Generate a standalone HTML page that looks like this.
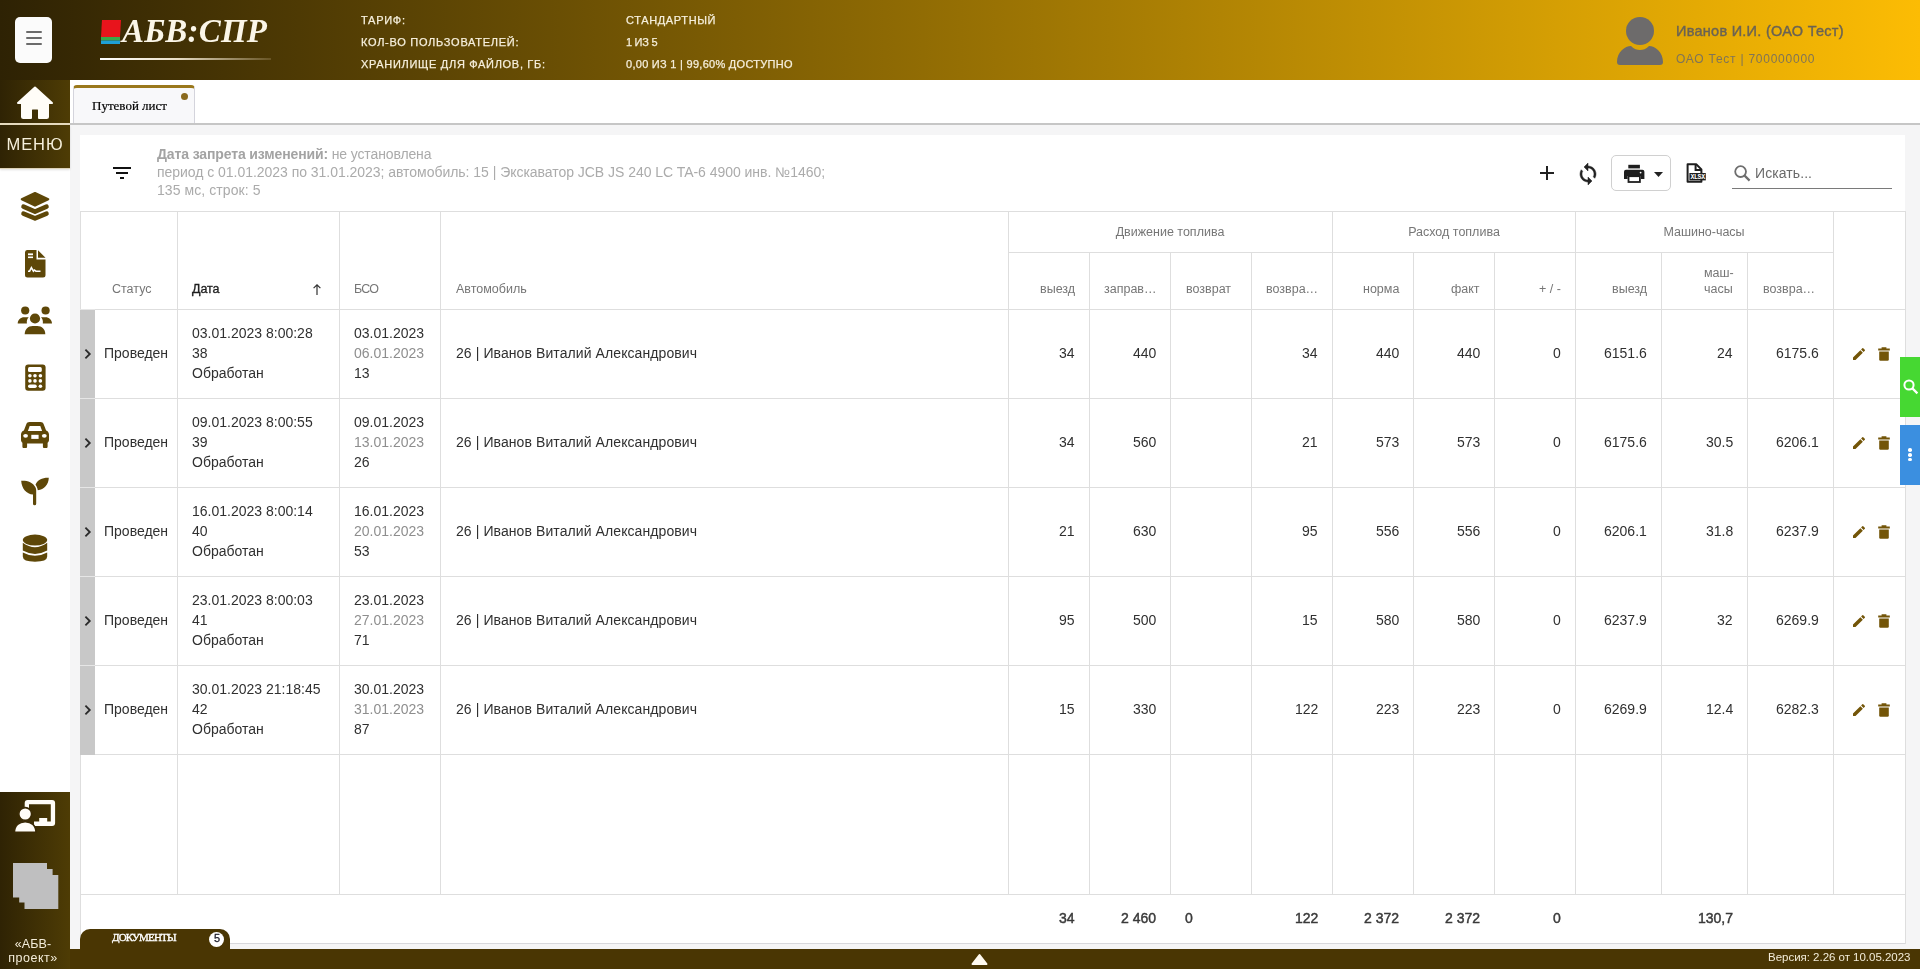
<!DOCTYPE html>
<html><head><meta charset="utf-8"><style>
*{margin:0;padding:0;box-sizing:border-box}
html,body{width:1920px;height:969px;overflow:hidden;background:#f5f5f6;font-family:"Liberation Sans",sans-serif;position:relative}
.abs{position:absolute}
.t{position:absolute;white-space:nowrap;line-height:1;will-change:transform}
.vl{position:absolute;width:1px;background:#dedede}
.hl{position:absolute;height:1px;background:#dedede}
</style></head><body>

<div class="abs" style="left:0;top:0;width:1920px;height:80px;background:linear-gradient(to right,#2e2204 0%,#fcbc04 100%)"></div>
<div class="abs" style="left:15px;top:17px;width:37px;height:46px;background:#fbfbfb;border-radius:5px"></div>
<div class="abs" style="left:26px;top:31px;width:16px;height:2px;background:#6b6b6b;border-radius:1px"></div>
<div class="abs" style="left:26px;top:37px;width:16px;height:2px;background:#6b6b6b;border-radius:1px"></div>
<div class="abs" style="left:26px;top:43px;width:16px;height:2px;background:#6b6b6b;border-radius:1px"></div>
<svg class="abs" style="left:100px;top:19px" width="22" height="26" viewBox="0 0 22 26"><path d="M2 1h19l-1 17H1z" fill="#e8141c"/><path d="M1 18h19v3.5H1z" fill="#3aa84a"/><path d="M1 21.5h19l0 3.5H1z" fill="#1ea0d8"/></svg>
<div class="abs" style="left:100px;top:58px;width:171px;height:2px;background:linear-gradient(to right,#fff 0%,#eadfc8 45%,rgba(190,170,130,0.25) 100%)"></div>
<svg class="abs" style="left:1616px;top:16px" width="48" height="50" viewBox="0 0 48 50"><circle cx="24" cy="15" r="14" fill="#6d6b6b"/><path d="M1 46c0-10 8-16 14-16 3 3 6 4 9 4s6-1 9-4c6 0 14 6 14 16a3 3 0 0 1-3 3H4a3 3 0 0 1-3-3z" fill="#6d6b6b"/></svg>
<div class="abs" style="left:0;top:80px;width:70px;height:889px;background:#fff"></div>
<div class="abs" style="left:0;top:80px;width:70px;height:43px;background:linear-gradient(to right,#2f2304,#4e3c05)"></div>
<div class="abs" style="left:0;top:123px;width:70px;height:2px;background:#e6dbbf"></div>
<div class="abs" style="left:0;top:125px;width:70px;height:44px;background:linear-gradient(to right,#2f2304,#4e3c05);border-bottom:1px solid #ddd2b8;box-shadow:0 1px 2px rgba(0,0,0,0.12)"></div>
<svg class="abs" style="left:16px;top:86px" width="38" height="34" viewBox="0 0 38 34"><path d="M19 1.5 L36 17 L32 17 L32 30.5 a1.5 1.5 0 0 1-1.5 1.5 L23 32 L23 24 a1.5 1.5 0 0 0-1.5-1.5 L16.5 22.5 a1.5 1.5 0 0 0-1.5 1.5 L15 32 L7.5 32 a1.5 1.5 0 0 1-1.5-1.5 L6 17 L2 17 Z" fill="#fffdf8" stroke="#fffdf8" stroke-width="2" stroke-linejoin="round"/></svg>
<svg class="abs" style="left:20px;top:191px" width="30" height="30" viewBox="0 0 30 30"><path d="M1.8 8.2L15 2 28.2 8.2 15 14.6z" fill="#5e4708" stroke="#5e4708" stroke-width="2.2" stroke-linejoin="round"/><path d="M3.5 15.6L15 20.6 26.5 15.6" fill="none" stroke="#5e4708" stroke-width="4.6" stroke-linecap="round" stroke-linejoin="round"/><path d="M3.5 22.6L15 27.4 26.5 22.6" fill="none" stroke="#5e4708" stroke-width="4.6" stroke-linecap="round" stroke-linejoin="round"/></svg>
<svg class="abs" style="left:24px;top:249px" width="23" height="29" viewBox="0 0 23 29"><path d="M3 1h9.5v9.5h9v15.5a2.5 2.5 0 0 1-2.5 2.5H3.5A2.5 2.5 0 0 1 1 26V3.5A2.5 2.5 0 0 1 3 1z" fill="#5e4708"/><path d="M14 1.2l7.5 7.6H14z" fill="#5e4708"/><rect x="4" y="4.4" width="5" height="1.8" fill="#fff"/><rect x="4" y="7.5" width="5" height="1.6" fill="#fff"/><path d="M4 22.2h1.6l1.8-3.6 2 3.6 1-1.2 1.5 1.2h4.6" fill="none" stroke="#fff" stroke-width="1.6"/></svg>
<svg class="abs" style="left:16px;top:304px" width="38" height="32" viewBox="0 0 38 32"><circle cx="9.2" cy="6.5" r="4.1" fill="#5e4708"/><circle cx="29.6" cy="6.5" r="4.1" fill="#5e4708"/><path d="M1.7 19.6c0-3.8 3-6.4 6.5-6.4h4.5c-1.6 1.4-2.2 3.6-1.8 6.4z" fill="#5e4708"/><path d="M36 19.6c0-3.8-3-6.4-6.5-6.4H25c1.6 1.4 2.2 3.6 1.8 6.4z" fill="#5e4708"/><circle cx="19" cy="14.5" r="5.1" fill="#5e4708"/><path d="M8.7 30.2c0-5 3.5-8.2 8-8.2h4.6c4.5 0 8 3.2 8 8.2z" fill="#5e4708"/></svg>
<svg class="abs" style="left:24px;top:363px" width="23" height="29" viewBox="0 0 23 29"><rect x="1.2" y="1.4" width="20.4" height="26.4" rx="3" fill="#5e4708"/><rect x="4" y="4.1" width="13.8" height="4.9" rx="1.6" fill="#fff"/><g fill="#fff"><circle cx="5.9" cy="12.7" r="1.8"/><circle cx="11" cy="12.7" r="1.8"/><circle cx="16.4" cy="12.7" r="1.8"/><circle cx="5.9" cy="17.9" r="1.8"/><circle cx="11" cy="17.9" r="1.8"/><circle cx="16.4" cy="17.9" r="1.8"/><rect x="4" y="21.5" width="8.8" height="3.6" rx="1.8"/><circle cx="16.4" cy="23.3" r="1.8"/></g></svg>
<svg class="abs" style="left:20px;top:421px" width="30" height="27" viewBox="0 0 30 27"><path d="M9.5 1.1h11c1.6 0 2.7.8 3.2 2.2l2.4 6.3c1.7.6 2.9 2.1 2.9 4v5.4c0 1.2-.6 2.2-1.4 2.8v3.6a1.9 1.9 0 0 1-1.9 1.9h-.9a1.9 1.9 0 0 1-1.9-1.9v-3H7.1v3a1.9 1.9 0 0 1-1.9 1.9h-.9a1.9 1.9 0 0 1-1.9-1.9v-3.6C1.6 21.2 1 20.2 1 19v-5.4c0-1.9 1.2-3.4 2.9-4l2.4-6.3C6.8 1.9 7.9 1.1 9.5 1.1z" fill="#5e4708"/><path d="M9.7 4.9h10.6l1.8 5H7.9z" fill="#fff"/><ellipse cx="5.6" cy="14.8" rx="2.4" ry="1.9" fill="#fff"/><ellipse cx="24.3" cy="14.8" rx="2.4" ry="1.9" fill="#fff"/><rect x="11.3" y="13.8" width="7.3" height="4.1" fill="#fff"/></svg>
<svg class="abs" style="left:20px;top:476px" width="30" height="30" viewBox="0 0 30 30"><path d="M1.2 4.8c5.8-.4 11.6 1.4 14.2 6.5.5 1 .8 2.2.8 3.2v13.2a1.6 1.6 0 0 1-3.2 0V18.6C6.6 18.2 1.5 12.5 1.2 4.8z" fill="#5e4708"/><path d="M28.8 1.8c-5.6-.4-11.8 2.3-13.3 6.9 1.3 1.7 2 3.6 2.3 5.6 6.4-.6 10.8-5.6 11-12.5z" fill="#5e4708"/></svg>
<svg class="abs" style="left:22px;top:533px" width="26" height="30" viewBox="0 0 26 30"><ellipse cx="13" cy="7.1" rx="12.2" ry="5.5" fill="#5e4708"/><path d="M0.8 9.8Q13 18.6 25.2 9.8V17.6Q13 24.4 0.8 17.6Z" fill="#5e4708"/><path d="M0.8 19.4Q13 26 25.2 19.4V23.6Q25.2 28.8 13 28.8Q0.8 28.8 0.8 23.6Z" fill="#5e4708"/></svg>
<div class="abs" style="left:0;top:792px;width:70px;height:177px;background:linear-gradient(to right,#2f2304,#4e3c05)"></div>
<svg class="abs" style="left:14px;top:799px" width="42" height="34" viewBox="0 0 42 34"><path d="M10.7 9V3.9a3 3 0 0 1 3-3h24.4a3 3 0 0 1 3 3v20.1a3 3 0 0 1-3 3H20v-4.4h16.8V5.3H15V9z" fill="#fffdf8"/><rect x="25.2" y="19" width="8" height="4" fill="#fffdf8"/><circle cx="11.2" cy="15" r="6.4" fill="#fffdf8" stroke="#3a2a05" stroke-width="1.6"/><path d="M0.4 33.4c0-6.8 4.6-10.8 10.8-10.8s10.8 4 10.8 10.8z" fill="#fffdf8" stroke="#3a2a05" stroke-width="1.6"/></svg>
<svg class="abs" style="left:12.7px;top:863px" width="46" height="47" viewBox="0 0 46 47"><path d="M0 0h34v6h5.6v6h5.7v34H11.5v-6.5H6.2v-5.1H0z" fill="#bfbfc0"/></svg>
<div class="abs" style="left:70px;top:80px;width:1850px;height:43px;background:#fff"></div>
<div class="abs" style="left:70px;top:123px;width:1850px;height:2px;background:#c6c6c6"></div>
<div class="abs" style="left:73px;top:85px;width:122px;height:38px;background:#f8f8fa;border:1px solid #d4d4dc;border-bottom:none;border-top:3px solid #9a781c;border-radius:4px 4px 0 0"></div>
<div class="abs" style="left:180.5px;top:92.5px;width:7.5px;height:7.5px;border-radius:50%;background:#8a6a1e"></div>
<div class="abs" style="left:80px;top:135px;width:1825px;height:809px;background:#fff"></div>
<div class="abs" style="left:113px;top:167px;width:18px;height:2px;background:#111"></div>
<div class="abs" style="left:116px;top:172px;width:12px;height:2px;background:#111"></div>
<div class="abs" style="left:120px;top:177px;width:4px;height:2px;background:#111"></div>
<svg class="abs" style="left:1539px;top:165px" width="16" height="16" viewBox="0 0 16 16"><path d="M8 1v14M1 8h14" stroke="#222" stroke-width="2"/></svg>
<svg class="abs" style="left:1576px;top:161.5px" width="24" height="24" viewBox="0 0 24 24"><path d="M12 4V1L8 5l4 4V6c3.31 0 6 2.69 6 6 0 1.01-.25 1.97-.7 2.8l1.46 1.46C19.54 15.03 20 13.57 20 12c0-4.42-3.58-8-8-8zm0 14c-3.31 0-6-2.69-6-6 0-1.01.25-1.97.7-2.8L5.24 7.74C4.46 8.97 4 10.43 4 12c0 4.42 3.58 8 8 8v3l4-4-4-4v3z" fill="#222" stroke="#222" stroke-width="0.5"/></svg>
<div class="abs" style="left:1611px;top:155px;width:60px;height:36px;border:1px solid #d0d0d0;border-radius:5px"></div>
<svg class="abs" style="left:1624px;top:164px" width="21" height="19" viewBox="0 0 21 19"><rect x="4.3" y="0.8" width="11.6" height="3.6" fill="#1e1e1e"/><path d="M2 5.8h16.4a2 2 0 0 1 2 2v7.2h-3.6v-3H3.6v3H0V7.8a2 2 0 0 1 2-2z" fill="#1e1e1e"/><rect x="4.5" y="12.2" width="11.4" height="5.8" fill="#fff" stroke="#1e1e1e" stroke-width="1.8"/><circle cx="16.6" cy="8.6" r="0.9" fill="#fff"/></svg>
<svg class="abs" style="left:1653.5px;top:171.5px" width="9" height="6" viewBox="0 0 9 6"><path d="M0 0h9L4.5 5z" fill="#222"/></svg>
<svg class="abs" style="left:1686px;top:163px" width="21" height="20" viewBox="0 0 21 20"><path d="M1.6 1.2h8.6l5.2 5.2v12.3H1.6z" fill="#fff" stroke="#1e1e1e" stroke-width="2" stroke-linejoin="round"/><path d="M9.6 1.2v5.8h5.8" fill="none" stroke="#1e1e1e" stroke-width="2"/><rect x="3.4" y="10" width="16.4" height="7.4" fill="#1e1e1e"/><text x="11.6" y="16.2" font-family="Liberation Mono" font-size="6.6" font-weight="bold" fill="#fff" text-anchor="middle" letter-spacing="-0.4">XLSX</text></svg>
<svg class="abs" style="left:1734px;top:165px" width="17" height="17" viewBox="0 0 17 17"><circle cx="6.6" cy="6.6" r="5.4" fill="none" stroke="#6e6e6e" stroke-width="1.8"/><path d="M10.6 10.6l5 5" stroke="#6e6e6e" stroke-width="2.2"/></svg>
<div class="abs" style="left:1732px;top:187.5px;width:160px;height:1.5px;background:#7a7a7a"></div>
<div class="hl" style="left:80px;top:211px;width:1826px"></div>
<div class="hl" style="left:1008px;top:252px;width:825px"></div>
<div class="hl" style="left:80px;top:309px;width:1826px"></div>
<div class="hl" style="left:80px;top:398px;width:1826px"></div>
<div class="hl" style="left:80px;top:487px;width:1826px"></div>
<div class="hl" style="left:80px;top:576px;width:1826px"></div>
<div class="hl" style="left:80px;top:665px;width:1826px"></div>
<div class="hl" style="left:80px;top:754px;width:1826px"></div>
<div class="hl" style="left:80px;top:894px;width:1826px"></div>
<div class="hl" style="left:80px;top:943px;width:1826px;background:#d8d8dc"></div>
<div class="vl" style="left:80px;top:211px;height:733px"></div>
<div class="vl" style="left:177px;top:211px;height:684px"></div>
<div class="vl" style="left:339px;top:211px;height:684px"></div>
<div class="vl" style="left:440px;top:211px;height:684px"></div>
<div class="vl" style="left:1008px;top:211px;height:684px"></div>
<div class="vl" style="left:1089px;top:252px;height:643px"></div>
<div class="vl" style="left:1170px;top:252px;height:643px"></div>
<div class="vl" style="left:1251px;top:252px;height:643px"></div>
<div class="vl" style="left:1332px;top:211px;height:684px"></div>
<div class="vl" style="left:1413px;top:252px;height:643px"></div>
<div class="vl" style="left:1494px;top:252px;height:643px"></div>
<div class="vl" style="left:1575px;top:211px;height:684px"></div>
<div class="vl" style="left:1661px;top:252px;height:643px"></div>
<div class="vl" style="left:1747px;top:252px;height:643px"></div>
<div class="vl" style="left:1833px;top:211px;height:684px"></div>
<div class="vl" style="left:1905px;top:211px;height:733px"></div>
<svg class="abs" style="left:312px;top:283px" width="10" height="13" viewBox="0 0 10 13"><path d="M5 12V1.8M1.6 5.2L5 1.8 8.4 5.2" fill="none" stroke="#333" stroke-width="1.2"/></svg>
<div class="abs" style="left:80px;top:309px;width:15px;height:90px;background:#c8c8c8;border-top:1px solid #e6e6e6"></div>
<svg class="abs" style="left:83px;top:348px" width="10" height="12" viewBox="0 0 10 12"><path d="M2.4 1.6l4.4 4.4-4.4 4.4" fill="none" stroke="#2b2b2b" stroke-width="1.8"/></svg>
<svg class="abs" style="left:1851px;top:345.5px" width="16" height="16" viewBox="0 0 24 24"><path d="M3 17.25V21h3.75L17.81 9.94l-3.75-3.75L3 17.25zM20.71 7.04a1 1 0 0 0 0-1.41l-2.34-2.34a1 1 0 0 0-1.41 0l-1.83 1.83 3.75 3.75 1.83-1.83z" fill="#735508"/></svg>
<svg class="abs" style="left:1877px;top:346.5px" width="14" height="14" viewBox="0 0 14 14"><path d="M1.2 1.6h11.6v1.8H1.2z M4.6 0.2h4.8v1.6H4.6z" fill="#735508"/><path d="M2.2 4.4h9.6v8.2a1.2 1.2 0 0 1-1.2 1.2H3.4a1.2 1.2 0 0 1-1.2-1.2z" fill="#735508"/></svg>
<div class="abs" style="left:80px;top:398px;width:15px;height:90px;background:#c8c8c8;border-top:1px solid #e6e6e6"></div>
<svg class="abs" style="left:83px;top:437px" width="10" height="12" viewBox="0 0 10 12"><path d="M2.4 1.6l4.4 4.4-4.4 4.4" fill="none" stroke="#2b2b2b" stroke-width="1.8"/></svg>
<svg class="abs" style="left:1851px;top:434.5px" width="16" height="16" viewBox="0 0 24 24"><path d="M3 17.25V21h3.75L17.81 9.94l-3.75-3.75L3 17.25zM20.71 7.04a1 1 0 0 0 0-1.41l-2.34-2.34a1 1 0 0 0-1.41 0l-1.83 1.83 3.75 3.75 1.83-1.83z" fill="#735508"/></svg>
<svg class="abs" style="left:1877px;top:435.5px" width="14" height="14" viewBox="0 0 14 14"><path d="M1.2 1.6h11.6v1.8H1.2z M4.6 0.2h4.8v1.6H4.6z" fill="#735508"/><path d="M2.2 4.4h9.6v8.2a1.2 1.2 0 0 1-1.2 1.2H3.4a1.2 1.2 0 0 1-1.2-1.2z" fill="#735508"/></svg>
<div class="abs" style="left:80px;top:487px;width:15px;height:90px;background:#c8c8c8;border-top:1px solid #e6e6e6"></div>
<svg class="abs" style="left:83px;top:526px" width="10" height="12" viewBox="0 0 10 12"><path d="M2.4 1.6l4.4 4.4-4.4 4.4" fill="none" stroke="#2b2b2b" stroke-width="1.8"/></svg>
<svg class="abs" style="left:1851px;top:523.5px" width="16" height="16" viewBox="0 0 24 24"><path d="M3 17.25V21h3.75L17.81 9.94l-3.75-3.75L3 17.25zM20.71 7.04a1 1 0 0 0 0-1.41l-2.34-2.34a1 1 0 0 0-1.41 0l-1.83 1.83 3.75 3.75 1.83-1.83z" fill="#735508"/></svg>
<svg class="abs" style="left:1877px;top:524.5px" width="14" height="14" viewBox="0 0 14 14"><path d="M1.2 1.6h11.6v1.8H1.2z M4.6 0.2h4.8v1.6H4.6z" fill="#735508"/><path d="M2.2 4.4h9.6v8.2a1.2 1.2 0 0 1-1.2 1.2H3.4a1.2 1.2 0 0 1-1.2-1.2z" fill="#735508"/></svg>
<div class="abs" style="left:80px;top:576px;width:15px;height:90px;background:#c8c8c8;border-top:1px solid #e6e6e6"></div>
<svg class="abs" style="left:83px;top:615px" width="10" height="12" viewBox="0 0 10 12"><path d="M2.4 1.6l4.4 4.4-4.4 4.4" fill="none" stroke="#2b2b2b" stroke-width="1.8"/></svg>
<svg class="abs" style="left:1851px;top:612.5px" width="16" height="16" viewBox="0 0 24 24"><path d="M3 17.25V21h3.75L17.81 9.94l-3.75-3.75L3 17.25zM20.71 7.04a1 1 0 0 0 0-1.41l-2.34-2.34a1 1 0 0 0-1.41 0l-1.83 1.83 3.75 3.75 1.83-1.83z" fill="#735508"/></svg>
<svg class="abs" style="left:1877px;top:613.5px" width="14" height="14" viewBox="0 0 14 14"><path d="M1.2 1.6h11.6v1.8H1.2z M4.6 0.2h4.8v1.6H4.6z" fill="#735508"/><path d="M2.2 4.4h9.6v8.2a1.2 1.2 0 0 1-1.2 1.2H3.4a1.2 1.2 0 0 1-1.2-1.2z" fill="#735508"/></svg>
<div class="abs" style="left:80px;top:665px;width:15px;height:90px;background:#c8c8c8;border-top:1px solid #e6e6e6"></div>
<svg class="abs" style="left:83px;top:704px" width="10" height="12" viewBox="0 0 10 12"><path d="M2.4 1.6l4.4 4.4-4.4 4.4" fill="none" stroke="#2b2b2b" stroke-width="1.8"/></svg>
<svg class="abs" style="left:1851px;top:701.5px" width="16" height="16" viewBox="0 0 24 24"><path d="M3 17.25V21h3.75L17.81 9.94l-3.75-3.75L3 17.25zM20.71 7.04a1 1 0 0 0 0-1.41l-2.34-2.34a1 1 0 0 0-1.41 0l-1.83 1.83 3.75 3.75 1.83-1.83z" fill="#735508"/></svg>
<svg class="abs" style="left:1877px;top:702.5px" width="14" height="14" viewBox="0 0 14 14"><path d="M1.2 1.6h11.6v1.8H1.2z M4.6 0.2h4.8v1.6H4.6z" fill="#735508"/><path d="M2.2 4.4h9.6v8.2a1.2 1.2 0 0 1-1.2 1.2H3.4a1.2 1.2 0 0 1-1.2-1.2z" fill="#735508"/></svg>
<div class="abs" style="left:1900px;top:357px;width:20px;height:60px;background:#46d832"></div>
<svg class="abs" style="left:1902px;top:378px" width="17" height="17" viewBox="0 0 17 17"><circle cx="7" cy="7" r="4.6" fill="none" stroke="#fff" stroke-width="2"/><path d="M10.4 10.4l5 5" stroke="#fff" stroke-width="2.2"/></svg>
<div class="abs" style="left:1900px;top:425px;width:20px;height:60px;background:#3b8fe0"></div>
<div class="abs" style="left:1908.2px;top:448.4px;width:3.6px;height:3.6px;border-radius:50%;background:#fff"></div>
<div class="abs" style="left:1908.2px;top:453px;width:3.6px;height:3.6px;border-radius:50%;background:#fff"></div>
<div class="abs" style="left:1908.2px;top:457.6px;width:3.6px;height:3.6px;border-radius:50%;background:#fff"></div>
<div class="abs" style="left:70px;top:949px;width:1850px;height:20px;background:#4a3603"></div>
<div class="abs" style="left:80px;top:929px;width:150px;height:21px;background:#4a3603;border-radius:10px 10px 0 0"></div>
<div class="abs" style="left:208.5px;top:931.5px;width:15px;height:15px;border-radius:50%;background:#fff"></div>
<svg class="abs" style="left:971px;top:953px" width="17" height="13" viewBox="0 0 17 13"><path d="M8.5 2L15.5 11H1.5z" fill="#fffaf0" stroke="#fffaf0" stroke-width="2" stroke-linejoin="round"/></svg>
<div class="t" style="left:122px;top:15.36px;font-size:33px;font-family:'Liberation Serif',serif;letter-spacing:0.198px;font-style:italic;font-weight:bold;color:#fbf6e8">АБВ:СПР</div>
<div class="t" style="left:361px;top:14.99px;font-size:11px;letter-spacing:0.728px;color:#f6efdc;-webkit-text-stroke:0.25px #f6efdc">ТАРИФ:</div>
<div class="t" style="left:626px;top:14.99px;font-size:11px;letter-spacing:0.634px;color:#f6efdc;-webkit-text-stroke:0.25px #f6efdc">СТАНДАРТНЫЙ</div>
<div class="t" style="left:361px;top:36.99px;font-size:11px;letter-spacing:0.728px;color:#f6efdc;-webkit-text-stroke:0.25px #f6efdc">КОЛ-ВО ПОЛЬЗОВАТЕЛЕЙ:</div>
<div class="t" style="left:626px;top:36.99px;font-size:11px;letter-spacing:-0.281px;color:#f6efdc;-webkit-text-stroke:0.25px #f6efdc">1 ИЗ 5</div>
<div class="t" style="left:361px;top:58.99px;font-size:11px;letter-spacing:0.689px;color:#f6efdc;-webkit-text-stroke:0.25px #f6efdc">ХРАНИЛИЩЕ ДЛЯ ФАЙЛОВ, ГБ:</div>
<div class="t" style="left:626px;top:58.99px;font-size:11px;letter-spacing:0.279px;color:#f6efdc;-webkit-text-stroke:0.25px #f6efdc">0,00 ИЗ 1 | 99,60% ДОСТУПНО</div>
<div class="t" style="left:1676px;top:23.73px;font-size:14.5px;letter-spacing:0.260px;color:#6a6354;-webkit-text-stroke:0.4px #6a6354">Иванов И.И. (ОАО Тест)</div>
<div class="t" style="left:1676px;top:52.84px;font-size:12px;letter-spacing:0.755px;color:#7f7458">ОАО Тест | 700000000</div>
<div class="t" style="left:-265px;width:600px;text-align:center;top:136.03px;font-size:16.5px;letter-spacing:0.885px;color:#f6f0dc">МЕНЮ</div>
<div class="t" style="left:-267.5px;width:600px;text-align:center;top:938.12px;font-size:12.5px;letter-spacing:0.125px;color:#f3ecd9">«АБВ-</div>
<div class="t" style="left:-267px;width:600px;text-align:center;top:952.42px;font-size:12.5px;letter-spacing:0.513px;color:#f3ecd9">проект»</div>
<div class="t" style="left:92px;top:99.11px;font-size:13px;font-family:'Liberation Serif',serif;letter-spacing:0.000px;color:#000;-webkit-text-stroke:0.2px #000">Путевой лист</div>
<div class="t" style="left:157px;top:146.65px;font-size:14px;letter-spacing:-0.128px;color:#ababab"><b style="font-weight:bold;color:#a3a3a3">Дата запрета изменений:</b> не установлена</div>
<div class="t" style="left:157px;top:164.65px;font-size:14px;letter-spacing:-0.034px;color:#ababab">период с 01.01.2023 по 31.01.2023; автомобиль: 15 | Экскаватор JCB JS 240 LC TA-6 4900 инв. №1460;</div>
<div class="t" style="left:157px;top:182.65px;font-size:14px;letter-spacing:0.078px;color:#ababab">135 мс, строк: 5</div>
<div class="t" style="left:1754.5px;top:165.95px;font-size:14px;letter-spacing:0.080px;color:#6a6a6a">Искать...</div>
<div class="t" style="left:112px;top:283.42px;font-size:12.5px;color:#767676">Статус</div>
<div class="t" style="left:192px;top:283.42px;font-size:12.5px;letter-spacing:-0.062px;color:#1e1e1e;-webkit-text-stroke:0.35px #1e1e1e">Дата</div>
<div class="t" style="left:354px;top:283.42px;font-size:12.5px;letter-spacing:-0.773px;color:#767676">БСО</div>
<div class="t" style="left:455.5px;top:283.42px;font-size:12.5px;color:#767676">Автомобиль</div>
<div class="t" style="left:870px;width:600px;text-align:center;top:226.42px;font-size:12.5px;color:#767676">Движение топлива</div>
<div class="t" style="left:1154px;width:600px;text-align:center;top:226.42px;font-size:12.5px;color:#767676">Расход топлива</div>
<div class="t" style="left:1404px;width:600px;text-align:center;top:226.42px;font-size:12.5px;color:#767676">Машино-часы</div>
<div class="t" style="right:845px;top:283.42px;font-size:12.5px;color:#767676">выезд</div>
<div class="t" style="left:1104px;top:283.42px;font-size:12.5px;color:#767676">заправ…</div>
<div class="t" style="left:1185.5px;top:283.42px;font-size:12.5px;color:#767676">возврат</div>
<div class="t" style="left:1266px;top:283.42px;font-size:12.5px;color:#767676">возвра…</div>
<div class="t" style="right:521px;top:283.42px;font-size:12.5px;color:#767676">норма</div>
<div class="t" style="right:440px;top:283.42px;font-size:12.5px;color:#767676">факт</div>
<div class="t" style="right:359px;top:283.42px;font-size:12.5px;color:#767676">+ / -</div>
<div class="t" style="right:273px;top:283.42px;font-size:12.5px;color:#767676">выезд</div>
<div class="t" style="left:1704px;top:267.42px;font-size:12.5px;color:#767676">маш-</div>
<div class="t" style="left:1704px;top:282.92px;font-size:12.5px;color:#767676">часы</div>
<div class="t" style="left:1762.5px;top:283.42px;font-size:12.5px;color:#767676">возвра…</div>
<div class="t" style="left:104px;top:346.15px;font-size:14px;color:#303030">Проведен</div>
<div class="t" style="left:192px;top:326.15px;font-size:14px;color:#303030">03.01.2023 8:00:28</div>
<div class="t" style="left:192px;top:346.15px;font-size:14px;color:#303030">38</div>
<div class="t" style="left:192px;top:366.15px;font-size:14px;color:#303030">Обработан</div>
<div class="t" style="left:354px;top:326.15px;font-size:14px;color:#303030">03.01.2023</div>
<div class="t" style="left:354px;top:346.15px;font-size:14px;color:#8e8e8e">06.01.2023</div>
<div class="t" style="left:354px;top:366.15px;font-size:14px;color:#303030">13</div>
<div class="t" style="left:455.5px;top:346.15px;font-size:14px;letter-spacing:0.086px;color:#303030">26 | Иванов Виталий Александрович</div>
<div class="t" style="right:845px;top:346.15px;font-size:14px;color:#303030">34</div>
<div class="t" style="right:764px;top:346.15px;font-size:14px;color:#303030">440</div>
<div class="t" style="right:602px;top:346.15px;font-size:14px;color:#303030">34</div>
<div class="t" style="right:521px;top:346.15px;font-size:14px;color:#303030">440</div>
<div class="t" style="right:440px;top:346.15px;font-size:14px;color:#303030">440</div>
<div class="t" style="right:359px;top:346.15px;font-size:14px;color:#303030">0</div>
<div class="t" style="right:273px;top:346.15px;font-size:14px;color:#303030">6151.6</div>
<div class="t" style="right:187px;top:346.15px;font-size:14px;color:#303030">24</div>
<div class="t" style="right:101px;top:346.15px;font-size:14px;color:#303030">6175.6</div>
<div class="t" style="left:104px;top:435.15px;font-size:14px;color:#303030">Проведен</div>
<div class="t" style="left:192px;top:415.15px;font-size:14px;color:#303030">09.01.2023 8:00:55</div>
<div class="t" style="left:192px;top:435.15px;font-size:14px;color:#303030">39</div>
<div class="t" style="left:192px;top:455.15px;font-size:14px;color:#303030">Обработан</div>
<div class="t" style="left:354px;top:415.15px;font-size:14px;color:#303030">09.01.2023</div>
<div class="t" style="left:354px;top:435.15px;font-size:14px;color:#8e8e8e">13.01.2023</div>
<div class="t" style="left:354px;top:455.15px;font-size:14px;color:#303030">26</div>
<div class="t" style="left:455.5px;top:435.15px;font-size:14px;letter-spacing:0.086px;color:#303030">26 | Иванов Виталий Александрович</div>
<div class="t" style="right:845px;top:435.15px;font-size:14px;color:#303030">34</div>
<div class="t" style="right:764px;top:435.15px;font-size:14px;color:#303030">560</div>
<div class="t" style="right:602px;top:435.15px;font-size:14px;color:#303030">21</div>
<div class="t" style="right:521px;top:435.15px;font-size:14px;color:#303030">573</div>
<div class="t" style="right:440px;top:435.15px;font-size:14px;color:#303030">573</div>
<div class="t" style="right:359px;top:435.15px;font-size:14px;color:#303030">0</div>
<div class="t" style="right:273px;top:435.15px;font-size:14px;color:#303030">6175.6</div>
<div class="t" style="right:187px;top:435.15px;font-size:14px;color:#303030">30.5</div>
<div class="t" style="right:101px;top:435.15px;font-size:14px;color:#303030">6206.1</div>
<div class="t" style="left:104px;top:524.15px;font-size:14px;color:#303030">Проведен</div>
<div class="t" style="left:192px;top:504.15px;font-size:14px;color:#303030">16.01.2023 8:00:14</div>
<div class="t" style="left:192px;top:524.15px;font-size:14px;color:#303030">40</div>
<div class="t" style="left:192px;top:544.15px;font-size:14px;color:#303030">Обработан</div>
<div class="t" style="left:354px;top:504.15px;font-size:14px;color:#303030">16.01.2023</div>
<div class="t" style="left:354px;top:524.15px;font-size:14px;color:#8e8e8e">20.01.2023</div>
<div class="t" style="left:354px;top:544.15px;font-size:14px;color:#303030">53</div>
<div class="t" style="left:455.5px;top:524.15px;font-size:14px;letter-spacing:0.086px;color:#303030">26 | Иванов Виталий Александрович</div>
<div class="t" style="right:845px;top:524.15px;font-size:14px;color:#303030">21</div>
<div class="t" style="right:764px;top:524.15px;font-size:14px;color:#303030">630</div>
<div class="t" style="right:602px;top:524.15px;font-size:14px;color:#303030">95</div>
<div class="t" style="right:521px;top:524.15px;font-size:14px;color:#303030">556</div>
<div class="t" style="right:440px;top:524.15px;font-size:14px;color:#303030">556</div>
<div class="t" style="right:359px;top:524.15px;font-size:14px;color:#303030">0</div>
<div class="t" style="right:273px;top:524.15px;font-size:14px;color:#303030">6206.1</div>
<div class="t" style="right:187px;top:524.15px;font-size:14px;color:#303030">31.8</div>
<div class="t" style="right:101px;top:524.15px;font-size:14px;color:#303030">6237.9</div>
<div class="t" style="left:104px;top:613.15px;font-size:14px;color:#303030">Проведен</div>
<div class="t" style="left:192px;top:593.15px;font-size:14px;color:#303030">23.01.2023 8:00:03</div>
<div class="t" style="left:192px;top:613.15px;font-size:14px;color:#303030">41</div>
<div class="t" style="left:192px;top:633.15px;font-size:14px;color:#303030">Обработан</div>
<div class="t" style="left:354px;top:593.15px;font-size:14px;color:#303030">23.01.2023</div>
<div class="t" style="left:354px;top:613.15px;font-size:14px;color:#8e8e8e">27.01.2023</div>
<div class="t" style="left:354px;top:633.15px;font-size:14px;color:#303030">71</div>
<div class="t" style="left:455.5px;top:613.15px;font-size:14px;letter-spacing:0.086px;color:#303030">26 | Иванов Виталий Александрович</div>
<div class="t" style="right:845px;top:613.15px;font-size:14px;color:#303030">95</div>
<div class="t" style="right:764px;top:613.15px;font-size:14px;color:#303030">500</div>
<div class="t" style="right:602px;top:613.15px;font-size:14px;color:#303030">15</div>
<div class="t" style="right:521px;top:613.15px;font-size:14px;color:#303030">580</div>
<div class="t" style="right:440px;top:613.15px;font-size:14px;color:#303030">580</div>
<div class="t" style="right:359px;top:613.15px;font-size:14px;color:#303030">0</div>
<div class="t" style="right:273px;top:613.15px;font-size:14px;color:#303030">6237.9</div>
<div class="t" style="right:187px;top:613.15px;font-size:14px;color:#303030">32</div>
<div class="t" style="right:101px;top:613.15px;font-size:14px;color:#303030">6269.9</div>
<div class="t" style="left:104px;top:702.15px;font-size:14px;color:#303030">Проведен</div>
<div class="t" style="left:192px;top:682.15px;font-size:14px;color:#303030">30.01.2023 21:18:45</div>
<div class="t" style="left:192px;top:702.15px;font-size:14px;color:#303030">42</div>
<div class="t" style="left:192px;top:722.15px;font-size:14px;color:#303030">Обработан</div>
<div class="t" style="left:354px;top:682.15px;font-size:14px;color:#303030">30.01.2023</div>
<div class="t" style="left:354px;top:702.15px;font-size:14px;color:#8e8e8e">31.01.2023</div>
<div class="t" style="left:354px;top:722.15px;font-size:14px;color:#303030">87</div>
<div class="t" style="left:455.5px;top:702.15px;font-size:14px;letter-spacing:0.086px;color:#303030">26 | Иванов Виталий Александрович</div>
<div class="t" style="right:845px;top:702.15px;font-size:14px;color:#303030">15</div>
<div class="t" style="right:764px;top:702.15px;font-size:14px;color:#303030">330</div>
<div class="t" style="right:602px;top:702.15px;font-size:14px;color:#303030">122</div>
<div class="t" style="right:521px;top:702.15px;font-size:14px;color:#303030">223</div>
<div class="t" style="right:440px;top:702.15px;font-size:14px;color:#303030">223</div>
<div class="t" style="right:359px;top:702.15px;font-size:14px;color:#303030">0</div>
<div class="t" style="right:273px;top:702.15px;font-size:14px;color:#303030">6269.9</div>
<div class="t" style="right:187px;top:702.15px;font-size:14px;color:#303030">12.4</div>
<div class="t" style="right:101px;top:702.15px;font-size:14px;color:#303030">6282.3</div>
<div class="t" style="right:845px;top:911.15px;font-size:14px;color:#3a3a3a;-webkit-text-stroke:0.45px #3a3a3a">34</div>
<div class="t" style="right:764px;top:911.15px;font-size:14px;color:#3a3a3a;-webkit-text-stroke:0.45px #3a3a3a">2 460</div>
<div class="t" style="left:1185px;top:911.15px;font-size:14px;color:#3a3a3a;-webkit-text-stroke:0.45px #3a3a3a">0</div>
<div class="t" style="right:602px;top:911.15px;font-size:14px;color:#3a3a3a;-webkit-text-stroke:0.45px #3a3a3a">122</div>
<div class="t" style="right:521px;top:911.15px;font-size:14px;color:#3a3a3a;-webkit-text-stroke:0.45px #3a3a3a">2 372</div>
<div class="t" style="right:440px;top:911.15px;font-size:14px;color:#3a3a3a;-webkit-text-stroke:0.45px #3a3a3a">2 372</div>
<div class="t" style="right:359px;top:911.15px;font-size:14px;color:#3a3a3a;-webkit-text-stroke:0.45px #3a3a3a">0</div>
<div class="t" style="right:187px;top:911.15px;font-size:14px;color:#3a3a3a;-webkit-text-stroke:0.45px #3a3a3a">130,7</div>
<div class="t" style="left:111.5px;top:931.79px;font-size:11px;font-family:'Liberation Serif',serif;letter-spacing:-0.826px;color:#fff;-webkit-text-stroke:0.35px #fff">ДОКУМЕНТЫ</div>
<div class="t" style="left:-83.19999999999999px;width:600px;text-align:center;top:933.49px;font-size:11px;color:#1c1c2a;-webkit-text-stroke:0.3px #1c1c2a">5</div>
<div class="t" style="right:10px;top:951.97px;font-size:11.5px;letter-spacing:-0.020px;color:#f3ecd9">Версия: 2.26 от 10.05.2023</div>
</body></html>
